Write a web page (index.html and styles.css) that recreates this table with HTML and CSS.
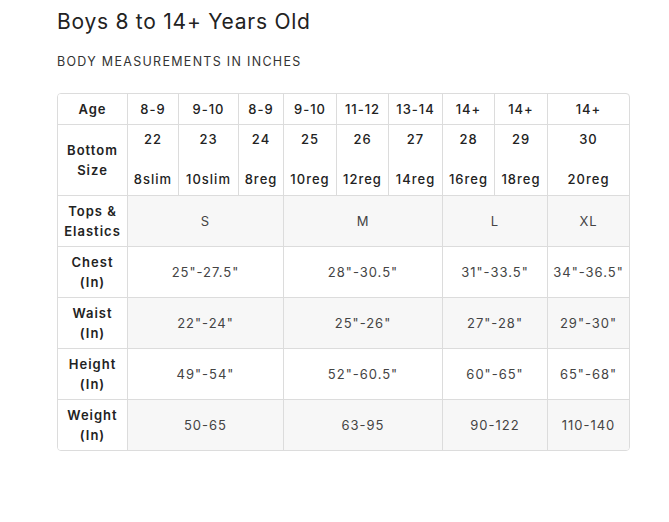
FILE: index.html
```html
<!DOCTYPE html>
<html>
<head>
<meta charset="utf-8">
<link rel="stylesheet" href="styles.css">
</head>
<body>
<div class="page">
  <h1 class="title">Boys 8 to 14+ Years Old</h1>
  <p class="subtitle">BODY MEASUREMENTS IN INCHES</p>
  <table class="size-table">
    <colgroup>
      <col class="c-label"><col class="c1"><col class="c2"><col class="c3"><col class="c4"><col class="c5"><col class="c6"><col class="c7"><col class="c8"><col class="c9">
    </colgroup>
    <tr class="head">
      <th>Age</th><td>8-9</td><td>9-10</td><td>8-9</td><td>9-10</td><td>11-12</td><td>13-14</td><td>14+</td><td>14+</td><td>14+</td>
    </tr>
    <tr class="head bottom">
      <th>Bottom<br>Size</th><td>22<br><br>8slim</td><td>23<br><br>10slim</td><td>24<br><br>8reg</td><td>25<br><br>10reg</td><td>26<br><br>12reg</td><td>27<br><br>14reg</td><td>28<br><br>16reg</td><td>29<br><br>18reg</td><td>30<br><br>20reg</td>
    </tr>
    <tr class="alt">
      <th>Tops &amp;<br>Elastics</th><td colspan="3">S</td><td colspan="3">M</td><td colspan="2">L</td><td>XL</td>
    </tr>
    <tr>
      <th>Chest<br>(In)</th><td colspan="3">25"-27.5"</td><td colspan="3">28"-30.5"</td><td colspan="2">31"-33.5"</td><td>34"-36.5"</td>
    </tr>
    <tr class="alt">
      <th>Waist<br>(In)</th><td colspan="3">22"-24"</td><td colspan="3">25"-26"</td><td colspan="2">27"-28"</td><td>29"-30"</td>
    </tr>
    <tr>
      <th>Height<br>(In)</th><td colspan="3">49"-54"</td><td colspan="3">52"-60.5"</td><td colspan="2">60"-65"</td><td>65"-68"</td>
    </tr>
    <tr class="alt last">
      <th>Weight<br>(In)</th><td colspan="3">50-65</td><td colspan="3">63-95</td><td colspan="2">90-122</td><td>110-140</td>
    </tr>
  </table>
</div>
</body>
</html>
```
FILE: styles.css
```css
html, body {
  margin: 0;
  padding: 0;
  background: #ffffff;
}
.page {
  padding: 8px 0 0 57px;
  font-family: Inter, "Noto Sans", sans-serif;
  color: #222;
}
.title {
  margin: 0;
  font-size: 21px;
  line-height: 28px;
  font-weight: 400;
  letter-spacing: 0.75px;
  color: #222;
}
.subtitle {
  margin: 18px 0 0 0;
  font-size: 12.5px;
  line-height: 16px;
  letter-spacing: 1.3px;
  color: #333;
}
.size-table {
  margin-top: 23px;
  width: 573px;
  table-layout: fixed;
  border-collapse: separate;
  border-spacing: 0;
  border: 1px solid #dcdcdc;
  border-radius: 4px;
  overflow: hidden;
  font-size: 13px;
  line-height: 20px;
  letter-spacing: 1px;
}
.c-label { width: 70px; }
.c1 { width: 51px; }
.c2 { width: 60px; }
.c3 { width: 45px; }
.c4 { width: 53px; }
.c5 { width: 52px; }
.c6 { width: 54px; }
.c7 { width: 52px; }
.c8 { width: 53px; }
.c9 { width: 81px; }
.size-table th,
.size-table td {
  padding: 5px 0;
  text-align: center;
  vertical-align: middle;
  border-right: 1px solid #dcdcdc;
  border-bottom: 1px solid #dcdcdc;
  white-space: nowrap;
  overflow: hidden;
}
.size-table th {
  font-weight: 600;
  color: #222;
  background: #fff;
}
.size-table td {
  font-weight: 400;
  color: #444;
}
.size-table tr td:last-child {
  border-right: none;
}
.size-table tr.last th,
.size-table tr.last td {
  border-bottom: none;
}
.size-table tr.head td {
  font-weight: 500;
  color: #222;
}
.size-table tr.bottom td {
  vertical-align: top;
  padding-top: 4px;
  padding-bottom: 6px;
}
.size-table tr.alt td {
  background: #f7f7f7;
}
```
